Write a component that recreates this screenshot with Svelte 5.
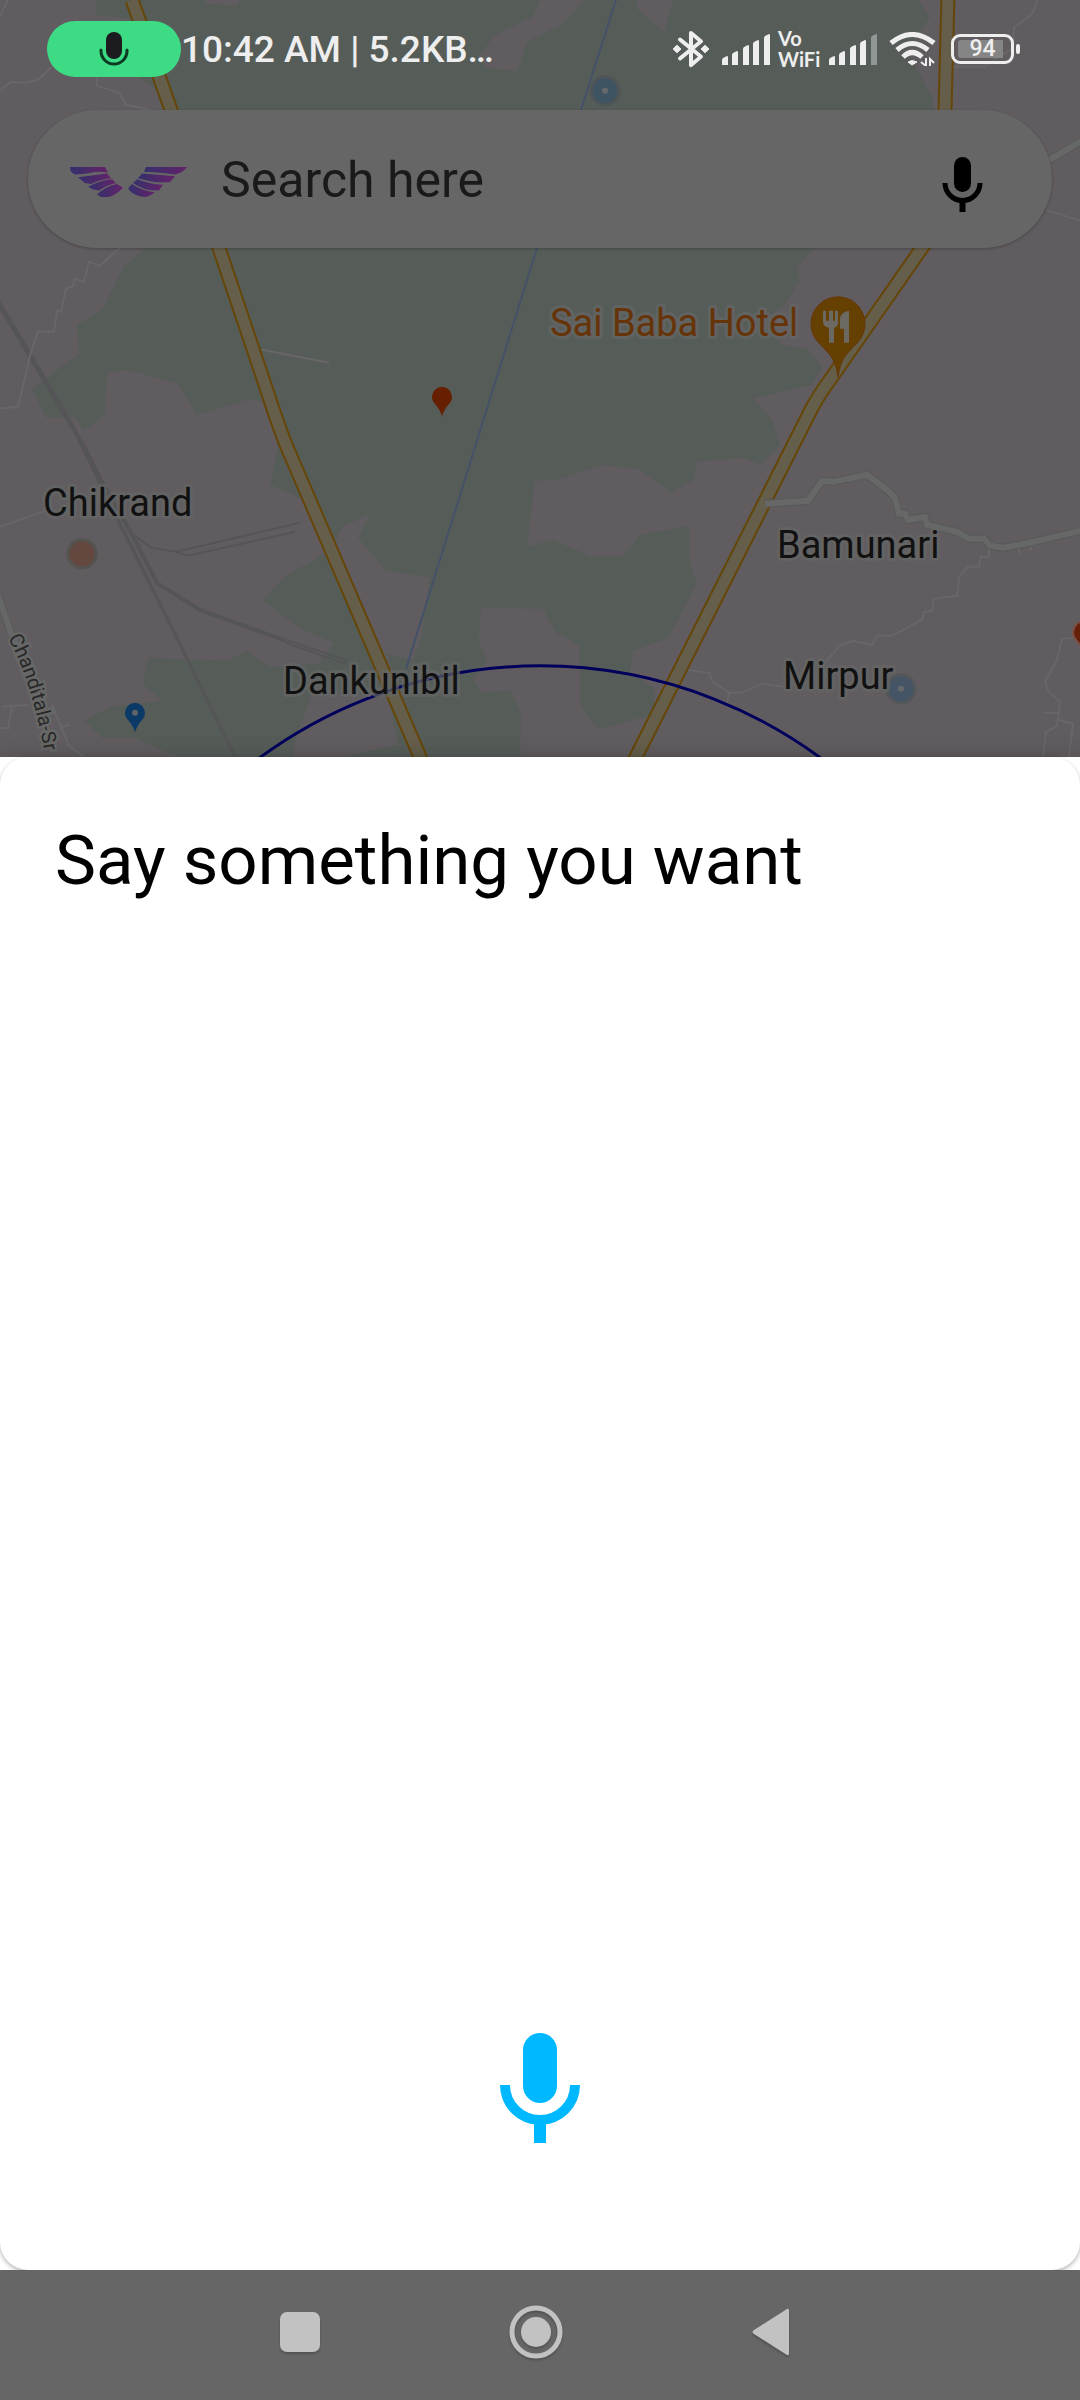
<script>
  const places = [
    { name: 'Chikrand', x: 43, y: 516 },
    { name: 'Dankunibil', x: 283, y: 694 },
    { name: 'Bamunari', x: 777, y: 558 },
    { name: 'Mirpur', x: 783, y: 689 }
  ];

  const highways = [
    'M132 0 L171 110 L219 248 L266 388 Q281 434 289 452 L420 757 V770',
    'M948 -5 L945 110 L944 200 Q943 218 922 248 L830 380 Q819 395 812 408 L636 757 L630 770'
  ];

  const lanes = [
    'M52 67 38 80 26 83 11 82 0 91',
    'M97 77V86L119 93 126 105 151 110',
    'M8 0 0 16',
    'M120 248 100 266 89 262 84 282 75 279 73 286 66 289 61 312 57 311 54 332H38L31 352 18 407 0 409',
    'M262 350 329 363',
    'M0 527 45 511',
    'M52 705 69 746 84 757',
    'M2 707 28 705M12 707 8 729 0 728M62 727 70 725',
    'M1038 0 1032 14 1014 28 1013 48 984 67H953',
    'M1046 210 1080 221',
    'M989 548V557H981L979 567H968L959 577 957 596 934 599 932 611 924 612 922 620 892 636H877L872 645 853 641 839 646 826 662',
    'M783 687 762 684 741 693H729L713 682 709 673 686 670M729 693 727 703',
    'M1077 638 1062 639 1057 660 1045 682 1048 691 1060 702 1058 720 1056 727 1046 732 1043 757M1044 713H1058M1058 720 1073 724 1069 757',
    'M1019 546V554M1031 543V551'
  ];

  const avenues = [
    'M765 504 808 501 822 481 833 482 867 475 887 490 895 498 899 514H905L908 520 925 517 927 525 957 532 969 539H984L990 546 1003 548 1029 543 1080 531 1090 529',
    'M1046 162 1090 136',
    'M-2 596 12 636 36 690'
  ];

  const bars = [
    { x: 0, top: 22 },
    { x: 10, top: 17 },
    { x: 21, top: 11 },
    { x: 31, top: 6 },
    { x: 42, top: 0 }
  ];
</script>

{#snippet mic(cls)}
  <svg class={cls} viewBox="0 0 80 110" aria-hidden="true">
    <rect x="23" y="0" width="34" height="70" rx="17" fill="currentColor" />
    <path d="M5 52a35 35 0 0 0 70 0" fill="none" stroke="currentColor" stroke-width="10" />
    <rect x="34" y="87" width="12" height="23" fill="currentColor" />
  </svg>
{/snippet}

{#snippet signal(weak)}
  <svg width="48" height="31" viewBox="0 0 48 31" aria-hidden="true">
    {#each bars as bar, i}
      <path
        d="M{bar.x} 31V{bar.top + 4}Q{bar.x} {bar.top + 3} {bar.x + 1} {bar.top + 2}L{bar.x + 5} {bar.top}Q{bar.x + 6} {bar.top} {bar.x + 6} {bar.top + 1}V31Z"
        fill="#eee"
        opacity={weak && i === 4 ? 0.4 : 1}
      />
    {/each}
  </svg>
{/snippet}

<div class="screen">
  <header class="top">
    <svg class="map" viewBox="0 0 1080 757" preserveAspectRatio="xMidYMid slice" role="img" aria-label="Map">
      <rect width="1080" height="757" fill="#605c60" />
      <g fill="#565d59">
        <path d="M96 0V15L129 19 139 77 155 90 171 130 146 248 124 266 103 309 77 325 79 354 32 389 46 418H75L84 431 105 415 107 374 127 370 178 384 197 416 250 399 263 402 278 447 270 485 300 498 331 550 336 540 343 526 370 515 358 538 386 571 430 578 420 643 413 660 387 655 420 757H520L521 713 510 690 482 693 473 679 487 662 479 641 481 608 543 609 555 632 579 646 581 708 599 730 654 714V688L630 673 633 651 669 638 697 583 690 562V526L640 535 622 557H592L553 540 527 547 535 481 558 480 603 465 640 470 671 493 694 480 697 462 743 458 761 465 780 445 772 419 753 399 812 385 822 367 807 349 783 345 760 323 783 307 800 280 797 268 815 248 933 110V98L914 65 908 50 930 17 918 0Z" />
        <path d="M324 554 282 579 263 601 301 629 334 643 318 664 270 667 247 651 227 661 148 658 143 684 162 701 110 707 85 721 102 738H134L177 757H293L296 736 312 694H388L398 745 344 757H420L368 640Z" />
      </g>
      <g fill="#605c60">
        <path d="M207 0H240L237 6 204 4Z" />
        <path d="M585 0 561 25 540 35 527 43 517 71 486 68 480 55 494 36 533 17 540 0Z" />
        <path d="M638 0 637 9 664 32 673 0Z" />
      </g>

      <g fill="none" stroke="#555557">
        <path stroke-width="5" d="M-2 302 72 426" />
        <path stroke-width="3" d="M72 426 114 512 169 622 235 757" />
        <path stroke-width="4" d="M72 426 86 450 103 484 131 533 157 583 200 610 286 641" />
        <path stroke-width="2" d="M286 640 348 661M286 643 346 664M131 533 151 548 176 552 300 523M176 552 188 556 295 532" />
      </g>
      <g fill="none" stroke="#686668" stroke-width="2">
        {#each lanes as d}<path {d} />{/each}
      </g>
      <path d="M616 0 581 110 537 248 406 669" fill="none" stroke="#445268" stroke-width="2" />
      {#each highways as d}
        <path {d} fill="none" stroke="#664608" stroke-width="15" />
        <path {d} fill="none" stroke="#645e4a" stroke-width="11" />
      {/each}
      {#each avenues as d}
        <path {d} fill="none" stroke="#575a59" stroke-width="8" />
        <path {d} fill="none" stroke="#666766" stroke-width="6" />
      {/each}

      <circle cx="540" cy="1139" r="473" fill="none" stroke="#00005c" stroke-width="3" />

      <circle cx="605" cy="91" r="14" fill="#3f5463" stroke="#4f5557" stroke-width="3" />
      <circle cx="605" cy="91" r="3" fill="#66696b" />
      <circle cx="82" cy="554" r="14" fill="#64483f" stroke="#55534f" stroke-width="3" />
      <circle cx="901" cy="689" r="14" fill="#455565" stroke="#54575a" stroke-width="3" />
      <circle cx="901" cy="689" r="3" fill="#66696b" />

      <path d="M442 417Q441 411 434 403A10 10 0 1 1 450 403Q443 411 442 417Z" fill="#661f00" />
      <path d="M1084 657Q1083 648 1076 640A11 11 0 1 1 1092 640Z" fill="#661f08" stroke="#7a5046" stroke-width="2" />
      <path d="M135 733Q134 727 127 719A10 10 0 1 1 143 719Q136 727 135 733Z" fill="#0c3a66" />
      <circle cx="135" cy="713" r="3" fill="#606467" />

      <path d="M838 377Q836 362 829 354L817 341A27 27 0 1 1 859 341L847 354Q840 362 838 377Z" fill="#664000" stroke="#663608" stroke-width="1" />
      <path d="M823 311h3v10h3v-10h4v10h2v-10h3v12q0 4-4 5v15h-5v-15q-6-1-6-6Z" fill="#6c6963" />
      <path d="M849 311v32h-5v-14h-4v-10q1-7 9-8Z" fill="#6c6963" />

      <g class="labels">
        {#each places as place}
          <text x={place.x} y={place.y}>{place.name}</text>
        {/each}
        <text class="hotel" x="550" y="336">Sai Baba Hotel</text>
      </g>
      <path id="street" d="M8 638Q36 690 48 775" fill="none" />
      <text class="street"><textPath href="#street">Chanditala-Sr</textPath></text>
    </svg>

    <div class="status">
      <span class="recording">
        <svg width="30" height="34" viewBox="0 0 30 34" aria-hidden="true">
          <rect x="7" y="0" width="16" height="27" rx="8" fill="#1c1b20" />
          <path d="M2 18v1a13 13 0 0 0 26 0v-1" fill="none" stroke="#0d3a22" stroke-width="3" stroke-linecap="round" />
        </svg>
      </span>
      <span class="clock">10:42 AM | 5.2KB…</span>
      <div class="indicators">
        <svg class="bluetooth" width="36" height="40" viewBox="0 0 36 42" preserveAspectRatio="none" aria-hidden="true">
          <path d="M7 11 28 29 18 38V4L28 13 7 31" fill="none" stroke="#eee" stroke-width="4" stroke-linejoin="round" stroke-linecap="round" />
          <path d="M0 21 4 17 8 21 4 25ZM28 21 32 17 36 21 32 25Z" fill="#eee" stroke="#eee" stroke-linejoin="round" />
        </svg>
        {@render signal(false)}
        <span class="volte">Vo<br />WiFi</span>
        {@render signal(true)}
        <svg class="wifi" width="47" height="34" viewBox="0 0 47 34" aria-hidden="true">
          <g fill="none" stroke="#eee" stroke-width="5">
            <path d="M2 11Q23-6 45 11" />
            <path d="M8 18Q23 5 39 18" />
            <path d="M14 25Q23 16 33 25" />
          </g>
          <path d="M19 30Q23 27 28 30L23 33Z" fill="#eee" stroke="#eee" stroke-linejoin="round" />
          <path d="M37 26V34L32 30M41 35V27L45 31" fill="none" stroke="#eee" stroke-width="2" />
        </svg>
        <span class="battery"><span class="level">94</span></span>
      </div>
    </div>

    <form class="search" onsubmit={(e) => e.preventDefault()}>
      <svg class="logo" width="118" height="32" viewBox="0 0 118 34" preserveAspectRatio="none" aria-hidden="true">
        <defs>
          <linearGradient id="wing">
            <stop offset="0" stop-color="#35306c" />
            <stop offset="1" stop-color="#64226a" />
          </linearGradient>
        </defs>
        <g fill="url(#wing)">
          <path d="M1 1H36L39 7Q28 5 18 8L6 9Q1 7 1 1Z" />
          <path d="M9 12 38 8 42 13Q32 14 22 19L16 18Z" />
          <path d="M19 22Q32 15 43 14L47 18Q38 20 30 26L24 25Z" />
          <path d="M28 30Q38 21 48 19L54 23Q48 30 40 33H32Z" />
          <path d="M118 1H77L75 6Q86 6 106 9Q114 7 118 1Z" />
          <path d="M73 8 106 11 101 17Q88 19 69 13Z" />
          <path d="M68 14Q80 19 94 20L90 26Q76 27 64 18Z" />
          <path d="M63 19Q72 26 86 28Q80 33 75 33Q64 32 59 24Z" />
        </g>
      </svg>
      <input type="text" placeholder="Search here" aria-label="Search here" />
      <button type="button" aria-label="Voice search">{@render mic('mic-small')}</button>
    </form>
  </header>

  <main class="sheet">
    <div class="card">
      <h1>Say something you want</h1>
      <button type="button" aria-label="Speak">{@render mic('mic-large')}</button>
    </div>
  </main>

  <nav class="nav" aria-label="System navigation">
    <button type="button" aria-label="Recent apps">
      <svg width="56" height="56" viewBox="0 0 56 56"><rect x="8" y="8" width="40" height="40" rx="7" /></svg>
    </button>
    <button type="button" aria-label="Home">
      <svg width="56" height="56" viewBox="0 0 56 56">
        <circle cx="28" cy="28" r="24" fill="none" stroke="#c2c2c2" stroke-width="5" />
        <circle cx="28" cy="28" r="15" />
      </svg>
    </button>
    <button type="button" aria-label="Back">
      <svg width="56" height="56" viewBox="0 0 56 56"><path d="M10 26 43 5Q45 4 45 7V49Q45 52 43 51L10 30Q7 28 10 26Z" /></svg>
    </button>
  </nav>
</div>

<style>
  :global(body) {
    margin: 0;
  }

  .screen {
    display: grid;
    grid-template-rows: 1fr 2fr auto;
    min-height: 100vh;
    background: #666;
    font-family: Roboto, 'Liberation Sans', sans-serif;
  }

  button {
    display: flex;
    padding: 0;
    border: 0;
    background: none;
    color: inherit;
  }

  .top {
    position: relative;
    overflow: hidden;
  }

  .map {
    position: absolute;
    inset: 0;
    width: 100%;
    height: 100%;
  }

  .labels {
    font-size: 38px;
    fill: #111;
    stroke: #656765;
    stroke-opacity: 0.7;
    stroke-width: 6px;
    stroke-linejoin: round;
    paint-order: stroke;
  }

  .labels .hotel {
    fill: #663408;
  }

  .street {
    font-size: 20px;
    fill: #282828;
    stroke: #666766;
    stroke-width: 5px;
    paint-order: stroke;
  }

  .status {
    position: relative;
    display: flex;
    align-items: center;
    height: 56px;
    padding: 21px 60px 0 47px;
    color: #eee;
  }

  .recording {
    display: flex;
    align-items: center;
    justify-content: center;
    width: 134px;
    height: 56px;
    border-radius: 28px;
    background: #3ddc84;
  }

  .clock {
    padding-top: 2px;
    font-size: 37px;
    font-weight: 500;
    line-height: 56px;
    white-space: nowrap;
  }

  .indicators {
    display: flex;
    align-items: center;
    margin-left: auto;
  }

  .bluetooth {
    margin-right: 13px;
  }

  .volte {
    width: 43px;
    margin: 0 8px;
    font-family: Lato, sans-serif;
    font-size: 20px;
    font-weight: 700;
    line-height: 21px;
  }

  .wifi {
    margin: 0 15px 0 12px;
  }

  .battery {
    position: relative;
    box-sizing: border-box;
    width: 63px;
    height: 30px;
    margin-right: 6px;
    padding: 3px 4px;
    border: 3px solid #eee;
    border-radius: 9px;
  }

  .battery::after {
    content: '';
    position: absolute;
    top: 7px;
    right: -9px;
    width: 4px;
    height: 10px;
    border-radius: 2px;
    background: #eee;
  }

  .level {
    display: block;
    border-radius: 3px;
    background: linear-gradient(90deg, #858585 92%, transparent 92%);
    font-size: 23px;
    font-weight: 500;
    line-height: 18px;
    text-align: center;
  }

  .search {
    position: relative;
    display: flex;
    align-items: center;
    height: 138px;
    box-sizing: border-box;
    margin: 33px 28px 0;
    padding: 0 69px 0 41px;
    border-radius: 69px;
    background: #666;
    box-shadow: 0 1px 3px rgb(0 0 0 / 0.25);
  }

  .logo {
    padding-top: 6px;
  }

  .search input {
    flex: 1;
    min-width: 0;
    margin: 0 32px 0 34px;
    padding: 2px 0 0;
    border: 0;
    outline: 0;
    background: none;
    color: #1a1a1a;
    font: 50px/60px Roboto, 'Liberation Sans', sans-serif;
  }

  .search input::placeholder {
    color: #1a1a1a;
    opacity: 1;
  }

  .search button {
    color: #000;
    padding-top: 10px;
  }

  .mic-small {
    width: 41px;
    height: 55px;
  }

  .sheet {
    position: relative;
    display: flex;
    background: #fff;
    box-shadow: 0 0 20px rgb(0 0 0 / 0.2);
  }

  .card {
    flex: 1;
    display: flex;
    flex-direction: column;
    align-items: center;
    justify-content: space-between;
    padding: 64px 55px 127px;
    border-radius: 28px;
    background: #fff;
    box-shadow: 0 2px 4px rgb(0 0 0 / 0.3);
  }

  h1 {
    align-self: stretch;
    margin: 0;
    font-size: 69px;
    font-weight: 400;
    line-height: 80px;
    color: #000;
  }

  .card button {
    color: #00b8ff;
  }

  .mic-large {
    width: 80px;
    height: 110px;
  }

  .nav {
    position: relative;
    display: flex;
    align-items: center;
    justify-content: center;
    gap: 180px;
    height: 130px;
    box-sizing: border-box;
    padding: 0 8px 6px 0;
    background: #666;
  }

  .nav svg {
    fill: #c2c2c2;
    filter: drop-shadow(0 2px 1px rgb(0 0 0 / 0.2));
  }
</style>
